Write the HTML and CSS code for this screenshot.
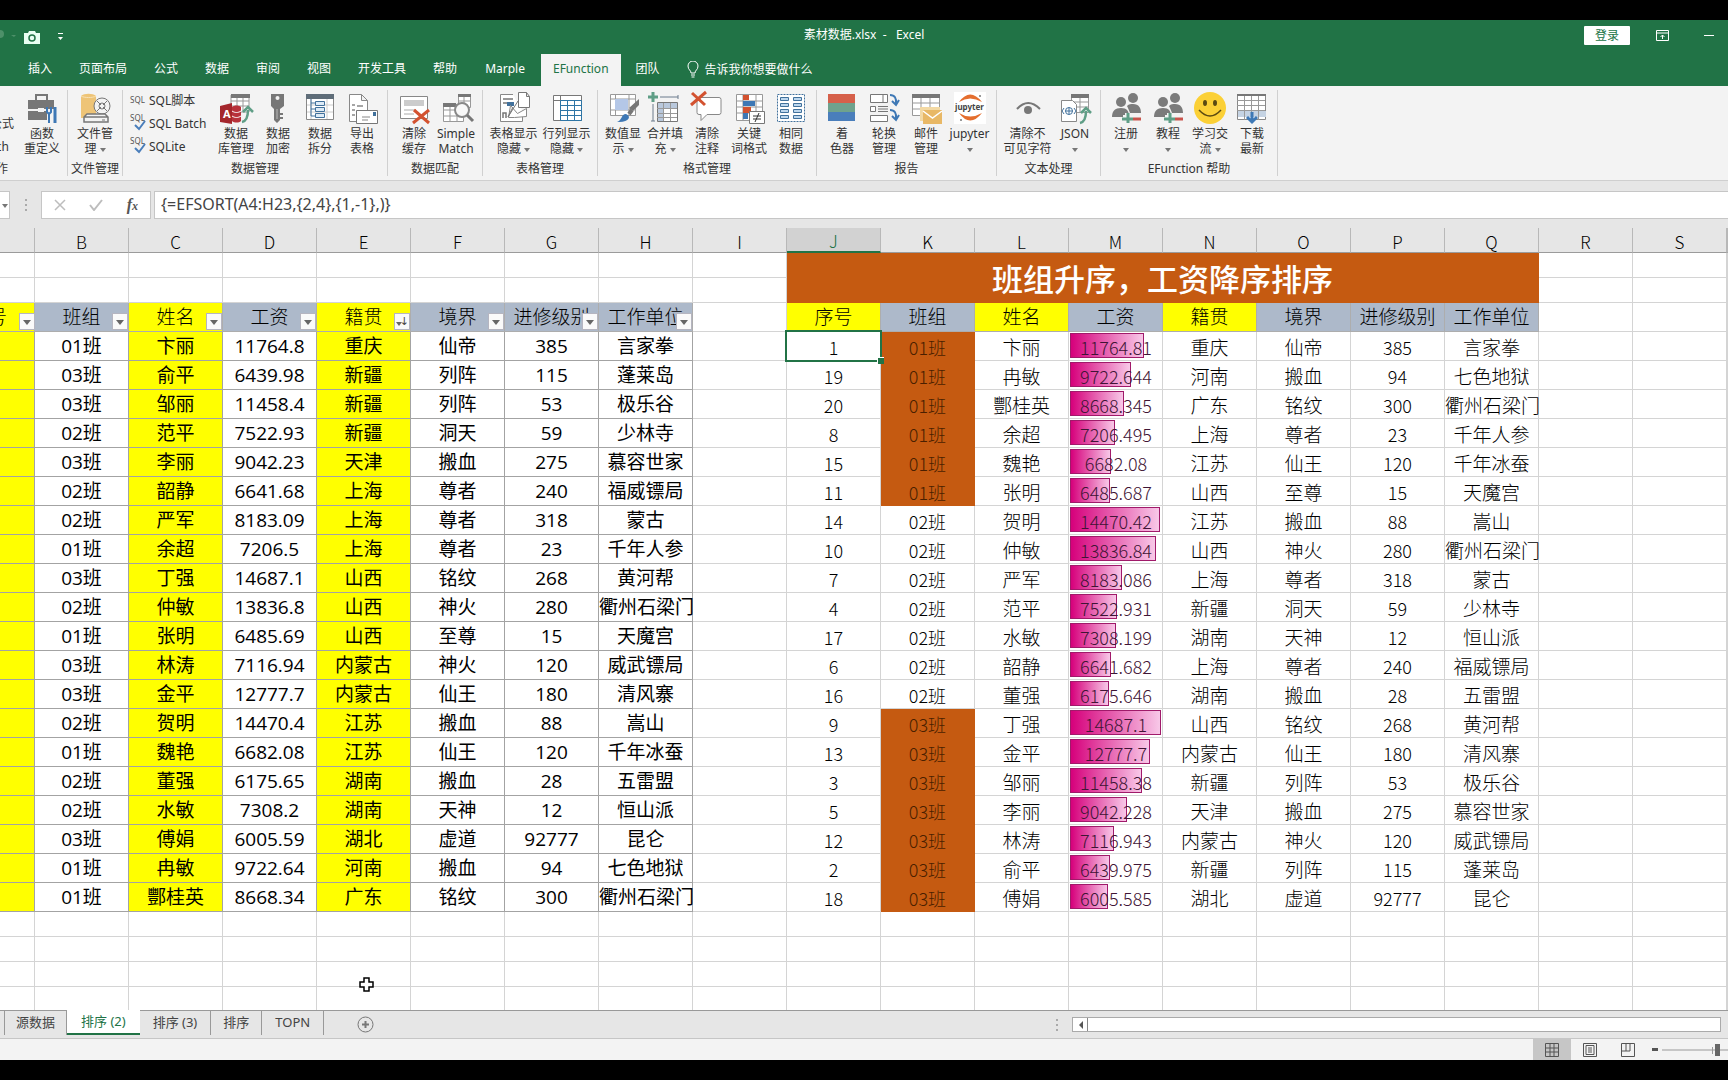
FILE: index.html
```html
<!DOCTYPE html>
<html lang="zh-CN">
<head>
<meta charset="utf-8">
<title>素材数据.xlsx - Excel</title>
<link rel="stylesheet" href="styles.css">
</head>
<body>
<svg class="defs" aria-hidden="true">
  <symbol id="people" viewBox="0 0 30 30"><g fill="#7b7b7b"><circle cx="10" cy="9" r="5"/><circle cx="22" cy="5" r="5"/><path d="M1 24c0-6 3-9 9-9s8 3 8 9z"/><path d="M16 13c2-2 4-2 6-2 6 0 8 4 8 9H19c-1-3-2-5-3-7z"/></g><path d="M17 20v11M12 25h11" stroke="#f3f3f3" stroke-width="6"/><path d="M17 20v11M11 26h11" stroke="#5f9e86" stroke-width="3"/><path d="M22 26h9" stroke="#c9544c" stroke-width="3"/></symbol>
</svg>
<div class="app">
  <header class="titlebar">
    <div class="quick">
      <svg width="60" height="18" viewBox="0 0 60 18"><circle cx="0" cy="6" r="4" fill="#4d9069"/><path d="M11 7h5l-2 2z" fill="#4d9069"/><path d="M24 5h4l1-2h6l1 2h4v11H24z" fill="#e9fff2"/><circle cx="32" cy="10" r="3" fill="none" stroke="#217346" stroke-width="1.5"/><path d="M58 5.500h5" stroke="#fff"/><path d="M58 9h5l-2.500 3z" fill="#fff"/></svg>
    </div>
    <h1 class="title">素材数据.xlsx&nbsp; -&nbsp; &nbsp;Excel</h1>
    <div class="window-tools">
      <button class="login">登录</button>
      <button class="plain" aria-label="功能区显示选项"><svg width="14" height="11" viewBox="0 0 14 11" fill="none" stroke="#fff"><path d="M.5.5h12v10H.5zM.5 3h12M6.500 9V5M4.500 7l2-2 2 2"/></svg></button>
      <button class="plain" aria-label="最小化"><svg width="10" height="11" viewBox="0 0 10 11"><path d="M0 5.500h10" stroke="#fff"/></svg></button>
    </div>
  </header>
  <nav class="tabs">
    <a href="#">插入</a><a href="#">页面布局</a><a href="#">公式</a><a href="#">数据</a><a href="#">审阅</a><a href="#">视图</a><a href="#">开发工具</a><a href="#">帮助</a><a href="#" class="latin">Marple</a><a href="#" class="active">EFunction</a><a href="#">团队</a>
    <a href="#" class="tell"><svg width="12" height="17" viewBox="0 0 12 17" fill="none" stroke="#fff"><path d="M4 12c0-3-3-3-3-7a5 5 0 0 1 10 0c0 4-3 4-3 7zM4 14h4M4.500 16h3"/></svg>告诉我你想要做什么</a>
  </nav>
  <section class="ribbon">
    <div class="group first">
      <div class="tools">
        <div class="cut"><span>公式</span><span class="short">ch</span></div>
        <button class="tool"><svg viewBox="0 0 30 30"><path d="M9 7V2h11v5" fill="none" stroke="#777" stroke-width="2"/><path d="M1 7h26v9H1zM1 18h19v9H1z" fill="#777"/><path d="M11 15h6v4h-6z" fill="#f3f3f3"/><path d="M20 14v5l2 2v9M24 14v5l-2 2" fill="none" stroke="#3e78b5" stroke-width="2"/><path d="M28 14v8M28 22v8" stroke="#3e78b5" stroke-width="3"/></svg>函数<br>重定义</button>
      </div>
      <div class="caption left">作</div>
    </div>
    <div class="group narrow">
      <div class="tools">
        <button class="tool"><svg viewBox="0 0 30 30"><path d="M1 3c3-3 12-3 15 0v22H1z" fill="#eec477"/><path d="M1 3c3 2 12 2 15 0" fill="none" stroke="#f9e2b5"/><circle cx="22" cy="13" r="8" fill="#f3f3f3" stroke="#777"/><circle cx="22" cy="13" r="3" fill="none" stroke="#777"/><path d="M17 8l4 4M27 18l-4-4M27 8l-4 4M17 18l4-4" stroke="#777"/><path d="M7 21h18l3 3v5H4v-5zM4 24h24" fill="#f3f3f3" stroke="#777" stroke-width="1.500"/><path d="M22 27h3" stroke="#777"/></svg>文件管<br>理 <i class="drop"></i></button>
      </div>
      <div class="caption">文件管理</div>
    </div>
    <div class="group">
      <div class="tools">
        <div class="sql-list">
          <button><svg width="16" height="18" viewBox="0 0 16 18"><text x="0" y="12" class="sql">SQL</text></svg>SQL脚本</button>
          <button><svg width="16" height="18" viewBox="0 0 16 18"><text x="0" y="7" class="sql">SQL</text><path d="M5 11l4 4 6-8" fill="none" stroke="#4a7ebb" stroke-width="2"/></svg>SQL Batch</button>
          <button><svg width="16" height="18" viewBox="0 0 16 18"><text x="0" y="7" class="sql">SQL</text><path d="M5 11l4 4 6-8" fill="none" stroke="#4a7ebb" stroke-width="2"/></svg>SQLite</button>
        </div>
        <button class="tool"><svg viewBox="0 0 30 30"><path d="M10 2h18v17H10zM10 8h18M10 13h18M16 2v17M22 2v17" fill="#fff" stroke="#999"/><path d="M10 1h19v4H10z" fill="#777"/><path d="M11 14c2-2 7-2 9 0v14c-2 2-7 2-9 0z" fill="#b8323b"/><path d="M11 18c3 2 6 2 9 0M11 23c3 2 6 2 9 0" fill="none" stroke="#fff"/><path d="M-1 13l12-3v21l-12-2z" fill="#a4262c"/><text x="2" y="25" class="letter">A</text><path d="M21 29c5-1 6-6 6-12M22 19l5-5 5 5" fill="none" stroke="#5f9e86" stroke-width="2.500"/></svg>数据<br>库管理</button>
        <button class="tool"><svg viewBox="0 0 30 30"><path d="M8 1h13v12l-4 3v11l-3 3-3-3V16l-3-3zM17 20h3v2h-3M17 24h3v2h-3" fill="#777"/><circle cx="14.500" cy="5" r="2" fill="#f3f3f3"/><path d="M14 16v10" stroke="#bbb"/></svg>数据<br>加密</button>
        <button class="tool"><svg viewBox="0 0 30 30"><path d="M1.500 1.500h27v25h-27z" fill="#fff" stroke="#888"/><path d="M1 1h28v5H1z" fill="#5f6d79"/><path d="M6 6v20M22 6v20M2 12h26M2 19h26" stroke="#ccc"/><path d="M6 6v17h4M6 10h4M6 16h4" fill="none" stroke="#41719c"/><path d="M10.500 8.500h9v4h-9zM10.500 14.500h9v4h-9zM10.500 20.500h9v4h-9z" fill="#ddebf7" stroke="#41719c"/></svg>数据<br>拆分</button>
        <button class="tool"><svg viewBox="0 0 30 30"><path d="M2.500 1.500h12l6 6v21h-18zM14.500 1.500v6h6" fill="#fff" stroke="#888"/><path d="M5 12h3M5 17h3M5 22h3M10 13h6" stroke="#888" stroke-width="1.500"/><path d="M9.500 17.500h21v13h-21z" fill="#fff" stroke="#777"/><path d="M26 19h3v4h-3z" fill="#41719c"/><path d="M15 24h8M15 27h6" stroke="#888"/></svg>导出<br>表格</button>
      </div>
      <div class="caption">数据管理</div>
    </div>
    <div class="group roomy">
      <div class="tools">
        <button class="tool"><svg viewBox="0 0 30 30"><path d="M1.500 3.500h27v22h-27z" fill="#fff" stroke="#888"/><path d="M5 7h20v6H5z" fill="#ccc"/><path d="M5 17h12M5 21h10" stroke="#aaa"/><path d="M15 17l15 13M30 17L14 30" stroke="#d35230" stroke-width="3"/></svg>清除<br>缓存</button>
        <button class="tool"><svg viewBox="0 0 30 30"><path d="M17.500 2.500h12v12h-12zM17 8h12M23 2v12M2.500 11.500h20v17h-20zM2 17h20M2 23h20M9 11v17M16 11v17" fill="#fff" stroke="#999"/><path d="M17 1h13v3H17zM2 10h13v4H2z" fill="#777"/><circle cx="21" cy="17" r="7" fill="#f8f8f8" stroke="#888" stroke-width="2"/><path d="M26 22l6 6" stroke="#777" stroke-width="3"/></svg>Simple<br>Match</button>
      </div>
      <div class="caption">数据匹配</div>
    </div>
    <div class="group">
      <div class="tools">
        <button class="tool wide"><svg viewBox="0 0 30 30"><path d="M14 1.500H1.500v27h22V18" fill="#fff" stroke="#888"/><path d="M4 6h10M4 10h6M4 25v-5h3v5" stroke="#777" fill="none" stroke-width="1.500"/><path d="M8 9h7v4H8z" fill="#41719c"/><path d="M9.500 24.500l2-12 7 8 9-5v8l-12 1z" fill="#fff" stroke="#888"/><path d="M19.500-.5h8l3 4v11h-11zM27.500-.5v4h3" fill="#fff" stroke="#777"/><path d="M19 8L9 24l5-10" fill="none" stroke="#777"/></svg>表格显示<br>隐藏 <i class="drop"></i></button>
        <button class="tool wide"><svg viewBox="0 0 30 30"><path d="M1.500 2.500h28v25h-28zM1 7.500h28M8.500 2v25" fill="#fff" stroke="#777"/><path d="M8 12.500h21M8 17.500h21M8 22.500h21M15.500 7v20M22.500 7v20M8.500 7.500h21v20h-21z" fill="none" stroke="#2e75a5"/></svg>行列显示<br>隐藏 <i class="drop"></i></button>
      </div>
      <div class="caption">表格管理</div>
    </div>
    <div class="group">
      <div class="tools">
        <button class="tool"><svg viewBox="0 0 30 30"><path d="M2.500 1.500h25v21h-25zM2 6h25M2 17h25M7.500 1v21M21 1v21" fill="#fff" stroke="#999"/><path d="M7 6h13v11H7z" fill="#b4c7e7"/><path d="M31 6v6l-6 6-4-3z" fill="#777"/><path d="M24 17l-3 4" stroke="#777" stroke-width="4"/><path d="M9 29c5-1 4-8 9-8 6 2 3 9-9 8z" fill="#3e78b5"/></svg>数值显<br>示 <i class="drop"></i></button>
        <button class="tool"><svg viewBox="0 0 30 30"><path d="M3-1v10M-2 4h10" stroke="#5f9e86" stroke-width="3"/><path d="M10 4h18M28 2v4M3 11v17M1 28h4" stroke="#6b7b8c"/><path d="M7.500 9.500h20v19h-20z" fill="#fff" stroke="#777"/><path d="M8 10h5v18H8zM13 10h14v5H13z" fill="#b9c8dc"/><path d="M7 15.500h20M7 20.500h20M7 24.500h20M13.500 10v18M20.500 10v18" stroke="#999"/></svg>合并填<br>充 <i class="drop"></i></button>
        <button class="tool"><svg viewBox="0 0 30 30"><path d="M7 4.500h20q2 0 2 2v13q0 2-2 2H15l-6 6v-6H7q-2 0-2-2v-13q0-2 2-2z" fill="#fff" stroke="#888"/><path d="M0 0l13 12M14-1L-1 12" stroke="#d35230" stroke-width="3"/></svg>清除<br>注释</button>
        <button class="tool"><svg viewBox="0 0 30 30"><path d="M2.500 1.500h26v26h-26zM2 8h26M2 14h26M2 20h26M9 1v26M22 1v26" fill="#fff" stroke="#999"/><path d="M9 2h6v5H9zM9 14h8v6H9z" fill="#d35230"/><path d="M9 8h12v5H9zM9 20h5v6H9z" fill="#3e78b5"/><path d="M15.500 18.500h15v12h-15z" fill="#fff" stroke="#777"/><path d="M19 23h8M19 26h8M25 20l-4 9" stroke="#333"/></svg>关键<br>词格式</button>
        <button class="tool"><svg viewBox="0 0 30 30"><path d="M1.500 1.500h27v27h-27z" fill="#fff" stroke="#41719c" stroke-dasharray="2 1"/><path d="M4.500 4.500h8v3h-8zM4.500 10.500h8v3h-8zM4.500 16.500h8v3h-8zM4.500 22.500h8v3h-8zM17.500 4.500h8v3h-8zM17.500 10.500h8v3h-8zM17.500 16.500h8v3h-8zM17.500 22.500h8v3h-8z" fill="#bdd7ee" stroke="#41719c"/></svg>相同<br>数据</button>
      </div>
      <div class="caption">格式管理</div>
    </div>
    <div class="group">
      <div class="tools">
        <button class="tool"><svg viewBox="0 0 30 30"><path d="M1 1h27v9H1z" fill="#d6604a"/><path d="M1 10h27v9H1z" fill="#6fa28d"/><path d="M1 19h27v9H1z" fill="#4a7ebb"/></svg>着<br>色器</button>
        <button class="tool"><svg viewBox="0 0 30 30"><path d="M1.500 1.500h17v8h-17zM14 2v7M1.500 13.500h5v5h-5zM9 13.500h10M9 16h10M9 18.500h10M1.500 22.500h17v6h-17z" fill="#fff" stroke="#777"/><path d="M21 2q7 0 6 9M23 8l4 4 3-5M21 17q7 0 6 9M23 23l4 4 3-5" fill="none" stroke="#3e78b5" stroke-width="2"/></svg>轮换<br>管理</button>
        <button class="tool"><svg viewBox="0 0 30 30"><path d="M1.500 1.500h27v21h-27zM1 10h27M1 16h27M10 2v20M19 2v20" fill="#fff" stroke="#999"/><path d="M1 1h28v4H1z" fill="#777"/><path d="M9 14h20v14H9z" fill="#f3d9a4"/><path d="M12 17h19v14H12z" fill="#e8b866"/><path d="M12 18l9.500 7 9.500-7" fill="none" stroke="#fff" stroke-width="1.500"/></svg>邮件<br>管理</button>
        <button class="tool jup"><svg viewBox="0 0 30 30"><path d="M-1-1h32v32H-1z" fill="#fff"/><path d="M4 9q11-15 23 0-12-7-23 0zM4 20q11 15 23 0-12 7-23 0z" fill="#e46e2e"/><text x="0" y="17" class="jtext">jupyter</text><circle cx="25" cy="3" r="1" fill="#777"/><circle cx="6" cy="27" r="1" fill="#777"/></svg>jupyter<br><i class="drop"></i></button>
      </div>
      <div class="caption">报告</div>
    </div>
    <div class="group">
      <div class="tools">
        <button class="tool wide"><svg viewBox="0 0 30 30"><path d="M4 16q11-12 23 0" fill="none" stroke="#777" stroke-width="2"/><circle cx="15" cy="17" r="4" fill="#777"/></svg>清除不<br>可见字符</button>
        <button class="tool"><svg viewBox="0 0 30 30"><path d="M11.500 1.500h17v18h-17zM11 9h17M11 14h17M20 2v17" fill="#fff" stroke="#999"/><path d="M11 1h18v4H11z" fill="#777"/><path d="M1.500 7.500h11l4 4v17h-15z" fill="#fff" stroke="#888"/><circle cx="9" cy="18" r="3.500" fill="none" stroke="#41719c"/><path d="M5.500 18h7M9 14.500v7M4 15l-2 3 2 3M14 15l2 3-2 3" fill="none" stroke="#41719c"/><path d="M20 30c5-1 6-6 6-12M21 20l5-5 5 5" fill="none" stroke="#5f9e86" stroke-width="2.500"/></svg>JSON<br><i class="drop"></i></button>
      </div>
      <div class="caption">文本处理</div>
    </div>
    <div class="group">
      <div class="tools">
        <button class="tool"><svg><use href="#people"/></svg>注册<br><i class="drop"></i></button>
        <button class="tool"><svg><use href="#people"/></svg>教程<br><i class="drop"></i></button>
        <button class="tool"><svg viewBox="0 0 30 30"><circle cx="15" cy="15" r="16" fill="#fbd036"/><ellipse cx="10" cy="10" rx="2" ry="3" fill="#5b4a12"/><ellipse cx="20" cy="10" rx="2" ry="3" fill="#5b4a12"/><path d="M4 17q11 12 22 0" fill="none" stroke="#5b4a12" stroke-width="1.500"/></svg>学习交<br>流 <i class="drop"></i></button>
        <button class="tool"><svg viewBox="0 0 30 30"><path d="M.5 1.500h28v25h-28z" fill="#fff" stroke="#888"/><path d="M1 18h28v6H1z" fill="#c5d3e3"/><path d="M0 7.500h28M0 12.500h28M0 17.500h28M7.500 2v25M14.500 2v25M21.500 2v25" stroke="#999"/><path d="M0 1h29v2H0z" fill="#777"/><path d="M15 19v8M10 24l5 5 5-5" fill="none" stroke="#3e78b5" stroke-width="3"/></svg>下载<br>最新</button>
      </div>
      <div class="caption">EFunction 帮助</div>
    </div>
  </section>
  <section class="formula-bar">
    <button class="name-drop" aria-label="名称框"><i class="drop"></i></button>
    <span class="dots"></span>
    <div class="fx-tools">
      <button class="plain" aria-label="取消"><svg width="12" height="12" viewBox="0 0 12 12"><path d="M1 1l10 10M11 1L1 11" stroke="#bdbdbd" stroke-width="1.500"/></svg></button>
      <button class="plain" aria-label="输入"><svg width="14" height="12" viewBox="0 0 14 12"><path d="M1 6l4 5 8-10" fill="none" stroke="#bdbdbd" stroke-width="2"/></svg></button>
      <button class="plain fx" aria-label="插入函数">f<small>x</small></button>
    </div>
    <input class="formula" aria-label="编辑栏" value="{=EFSORT(A4:H23,{2,4},{1,-1},)}">
  </section>
  <main class="sheet">
    <table>
      <colgroup><col class="ca"><col span="18" class="c"><col></colgroup>
      <thead><tr><th><th>B<th>C<th>D<th>E<th>F<th>G<th>H<th>I<th class="cur">J<th>K<th>L<th>M<th>N<th>O<th>P<th>Q<th>R<th>S<th></tr></thead>
      <tbody class="blank">
        <tr><td><td><td><td><td><td><td><td><td><td class="banner" colspan="8" rowspan="2">班组升序，工资降序排序<td><td><td></tr>
        <tr><td><td><td><td><td><td><td><td><td><td><td><td></tr>
      </tbody>
      <tbody class="heads">
        <tr><td class="y clip">序号<button class="flt" aria-label="筛选"></button><td>班组<button class="flt" aria-label="筛选"></button><td class="y">姓名<button class="flt" aria-label="筛选"></button><td>工资<button class="flt" aria-label="筛选"></button><td class="y">籍贯<button class="flt sorted" aria-label="已排序"></button><td>境界<button class="flt" aria-label="筛选"></button><td>进修级别<button class="flt" aria-label="筛选"></button><td>工作单位<button class="flt" aria-label="筛选"></button><td class="n"><td class="y">序号<td>班组<td class="y">姓名<td>工资<td class="y">籍贯<td>境界<td>进修级别<td>工作单位<td class="n"><td class="n"><td class="n"></tr>
      </tbody>
      <tbody class="data">
        <tr><td><td>01班<td>卞丽<td>11764.8<td>重庆<td>仙帝<td>385<td>言家拳<td><td class="sel">1<td class="o">01班<td>卞丽<td><b style="width:80%"></b>11764.81<td>重庆<td>仙帝<td>385<td>言家拳<td><td><td></tr>
        <tr><td><td>03班<td>俞平<td>6439.98<td>新疆<td>列阵<td>115<td>蓬莱岛<td><td>19<td class="o">01班<td>冉敏<td><b style="width:66%"></b>9722.644<td>河南<td>搬血<td>94<td>七色地狱<td><td><td></tr>
        <tr><td><td>03班<td>邹丽<td>11458.4<td>新疆<td>列阵<td>53<td>极乐谷<td><td>20<td class="o">01班<td>酆桂英<td><b style="width:59%"></b>8668.345<td>广东<td>铭纹<td>300<td>衢州石梁门<td><td><td></tr>
        <tr><td><td>02班<td>范平<td>7522.93<td>新疆<td>洞天<td>59<td>少林寺<td><td>8<td class="o">01班<td>余超<td><b style="width:49%"></b>7206.495<td>上海<td>尊者<td>23<td>千年人参<td><td><td></tr>
        <tr><td><td>03班<td>李丽<td>9042.23<td>天津<td>搬血<td>275<td>慕容世家<td><td>15<td class="o">01班<td>魏艳<td><b style="width:45%"></b>6682.08<td>江苏<td>仙王<td>120<td>千年冰蚕<td><td><td></tr>
        <tr><td><td>02班<td>韶静<td>6641.68<td>上海<td>尊者<td>240<td>福威镖局<td><td>11<td class="o">01班<td>张明<td><b style="width:44%"></b>6485.687<td>山西<td>至尊<td>15<td>天魔宫<td><td><td></tr>
        <tr><td><td>02班<td>严军<td>8183.09<td>上海<td>尊者<td>318<td>蒙古<td><td>14<td>02班<td>贺明<td><b style="width:98%"></b>14470.42<td>江苏<td>搬血<td>88<td>嵩山<td><td><td></tr>
        <tr><td><td>01班<td>余超<td>7206.5<td>上海<td>尊者<td>23<td>千年人参<td><td>10<td>02班<td>仲敏<td><b style="width:94%"></b>13836.84<td>山西<td>神火<td>280<td>衢州石梁门<td><td><td></tr>
        <tr><td><td>03班<td>丁强<td>14687.1<td>山西<td>铭纹<td>268<td>黄河帮<td><td>7<td>02班<td>严军<td><b style="width:56%"></b>8183.086<td>上海<td>尊者<td>318<td>蒙古<td><td><td></tr>
        <tr><td><td>02班<td>仲敏<td>13836.8<td>山西<td>神火<td>280<td>衢州石梁门<td><td>4<td>02班<td>范平<td><b style="width:51%"></b>7522.931<td>新疆<td>洞天<td>59<td>少林寺<td><td><td></tr>
        <tr><td><td>01班<td>张明<td>6485.69<td>山西<td>至尊<td>15<td>天魔宫<td><td>17<td>02班<td>水敏<td><b style="width:50%"></b>7308.199<td>湖南<td>天神<td>12<td>恒山派<td><td><td></tr>
        <tr><td><td>03班<td>林涛<td>7116.94<td>内蒙古<td>神火<td>120<td>威武镖局<td><td>6<td>02班<td>韶静<td><b style="width:45%"></b>6641.682<td>上海<td>尊者<td>240<td>福威镖局<td><td><td></tr>
        <tr><td><td>03班<td>金平<td>12777.7<td>内蒙古<td>仙王<td>180<td>清风寨<td><td>16<td>02班<td>董强<td><b style="width:42%"></b>6175.646<td>湖南<td>搬血<td>28<td>五雷盟<td><td><td></tr>
        <tr><td><td>02班<td>贺明<td>14470.4<td>江苏<td>搬血<td>88<td>嵩山<td><td>9<td class="o">03班<td>丁强<td><b style="width:99%"></b>14687.1<td>山西<td>铭纹<td>268<td>黄河帮<td><td><td></tr>
        <tr><td><td>01班<td>魏艳<td>6682.08<td>江苏<td>仙王<td>120<td>千年冰蚕<td><td>13<td class="o">03班<td>金平<td><b style="width:87%"></b>12777.7<td>内蒙古<td>仙王<td>180<td>清风寨<td><td><td></tr>
        <tr><td><td>02班<td>董强<td>6175.65<td>湖南<td>搬血<td>28<td>五雷盟<td><td>3<td class="o">03班<td>邹丽<td><b style="width:78%"></b>11458.38<td>新疆<td>列阵<td>53<td>极乐谷<td><td><td></tr>
        <tr><td><td>02班<td>水敏<td>7308.2<td>湖南<td>天神<td>12<td>恒山派<td><td>5<td class="o">03班<td>李丽<td><b style="width:62%"></b>9042.228<td>天津<td>搬血<td>275<td>慕容世家<td><td><td></tr>
        <tr><td><td>03班<td>傅娟<td>6005.59<td>湖北<td>虚道<td>92777<td>昆仑<td><td>12<td class="o">03班<td>林涛<td><b style="width:48%"></b>7116.943<td>内蒙古<td>神火<td>120<td>威武镖局<td><td><td></tr>
        <tr><td><td>01班<td>冉敏<td>9722.64<td>河南<td>搬血<td>94<td>七色地狱<td><td>2<td class="o">03班<td>俞平<td><b style="width:44%"></b>6439.975<td>新疆<td>列阵<td>115<td>蓬莱岛<td><td><td></tr>
        <tr><td><td>01班<td>酆桂英<td>8668.34<td>广东<td>铭纹<td>300<td>衢州石梁门<td><td>18<td class="o">03班<td>傅娟<td><b style="width:41%"></b>6005.585<td>湖北<td>虚道<td>92777<td>昆仑<td><td><td></tr>
      </tbody>
      <tbody class="blank">
        <tr><td><td><td><td><td><td><td><td><td><td><td><td><td><td><td><td><td><td><td><td></tr>
        <tr><td><td><td><td><td><td><td><td><td><td><td><td><td><td><td><td><td><td><td><td></tr>
        <tr><td><td><td><td><td><td><td><td><td><td><td><td><td><td><td><td><td><td><td><td></tr>
        <tr><td><td><td><td><td><td><td><td><td><td><td><td><td><td><td><td><td><td><td><td></tr>
      </tbody>
    </table>
    <svg class="cursor" width="17" height="17" viewBox="0 0 17 17"><path d="M6 2h5v4h4v5h-4v4H6v-4H2V6h4z" fill="#fff" stroke="#000" stroke-width="1.500"/></svg>
  </main>
  <footer class="sheet-bar">
    <nav class="sheets">
      <a href="#" class="lead">源数据</a><a href="#" class="active">排序 (2)</a><a href="#" class="roomy">排序 (3)</a><a href="#">排序</a><a href="#" class="roomy">TOPN</a>
      <button class="plain" aria-label="新工作表"><svg width="17" height="17" viewBox="0 0 17 17" fill="none" stroke="#777"><circle cx="8.500" cy="8.500" r="7.500"/><path d="M8.500 5v7M5 8.500h7" stroke-width="2"/></svg></button>
    </nav>
    <div class="scroll"><span class="dots"></span><div class="track"><button aria-label="向左滚动"><svg width="5" height="8" viewBox="0 0 5 8"><path d="M5 0v8L1 4z" fill="#555"/></svg></button></div></div>
  </footer>
  <div class="status">
    <button class="view on" aria-label="普通"><svg width="14" height="14" viewBox="0 0 14 14" fill="none" stroke="#555"><path d="M.5.5h13v13H.5zM.5 5h13M.5 9h13M5 .5v13M9 .5v13"/></svg></button>
    <button class="view" aria-label="页面布局"><svg width="14" height="14" viewBox="0 0 14 14" fill="none" stroke="#555"><path d="M.5.5h13v13H.5zM3 2.500h8v9H3zM5 5h4M5 7h4M5 9h4"/></svg></button>
    <button class="view" aria-label="分页预览"><svg width="14" height="14" viewBox="0 0 14 14" fill="none" stroke="#555"><path d="M.5.5h13v13H.5zM.5 8H9V.5M5 .5V8"/></svg></button>
    <button class="plain minus" aria-label="缩小"><svg width="6" height="3"><path d="M0 0h6v3H0z" fill="#555"/></svg></button>
    <svg class="slider" viewBox="0 0 66 12" width="66" height="12"><path d="M0 6h66M50.500 3v7" stroke="#999"/><path d="M53 0h5v12h-5z" fill="#666"/></svg>
  </div>
</div>
</body>
</html>
```
FILE: styles.css
```css
* { box-sizing: border-box; }
body {
  margin: 0;
  background: #000;
  font: 12px/15px "Noto Sans", "Noto Sans CJK SC", sans-serif;
  color: #333;
}
button { font: inherit; color: inherit; background: none; border: 0; padding: 0; }
a { color: inherit; text-decoration: none; }
.defs { position: absolute; width: 0; height: 0; }
.app { display: flex; flex-direction: column; height: 100vh; padding: 20px 0; overflow: hidden; }

.titlebar {
  display: grid;
  grid-template-columns: 1fr auto 1fr;
  align-items: center;
  flex: none;
  height: 34px;
  padding-bottom: 4px;
  background: #217346;
  color: #fff;
}
.quick svg { display: block; overflow: visible; margin-top: 4px; }
.title { margin: 0; padding-bottom: 2px; font-size: 12px; font-weight: 400; }
.window-tools { display: flex; justify-content: flex-end; align-items: center; padding-right: 14px; }
.login { width: 46px; height: 19px; margin-right: 26px; background: #fff; color: #217346; border-radius: 1px; }
.window-tools .plain + .plain { margin-left: 34px; }
.plain svg { display: block; }

.tabs { display: flex; flex: none; gap: 3px; height: 32px; padding-left: 16px; background: #217346; color: #fff; }
.tabs a { display: flex; align-items: center; padding: 0 12px 3px; }
.tabs .latin { padding: 0 13px 3px; }
.tabs .active { background: #f3f3f3; color: #217346; }
.tabs .tell { gap: 6px; padding-top: 1px; }

.ribbon { display: flex; flex: none; height: 95px; padding: 4px 0; background: #f3f3f3; border-bottom: 1px solid #cfcfcf; }
.group { display: flex; flex-direction: column; padding: 0 4px; border-right: 1px solid #d0d0d0; }
.group.first { padding-left: 0; overflow: hidden; }
.group.narrow { padding: 0 3px; }
.group.roomy { padding: 0 5px; }
.tools { display: flex; justify-content: center; height: 72px; }
.tool { display: flow-root; width: 42px; padding-top: 3px; text-align: center; white-space: nowrap; vertical-align: top; align-self: flex-start; }
.tool svg { display: block; width: 30px; height: 30px; margin: 0 auto 3px; overflow: visible; }
.tool.wide { width: 53px; }
.tool.jup { width: 45px; }
.caption { height: 15px; margin-top: 1px; text-align: center; white-space: nowrap; }
.caption.left { text-align: left; padding-left: 0; text-indent: -4px; }
.cut { display: flex; flex-direction: column; width: 21px; padding: 26px 7px 0 0; direction: rtl; white-space: nowrap; gap: 8px; }
.cut .short { padding-right: 5px; }
.drop { display: inline-block; vertical-align: middle; border: 3px solid transparent; border-top: 4px solid #777; border-bottom: 0; }
.sql-list { display: flex; flex-direction: column; gap: 5px; width: 88px; padding: 1px 0 0 3px; }
.sql-list button { display: flex; align-items: center; gap: 3px; height: 18px; white-space: nowrap; }
.sql-list svg { overflow: visible; }
.sql { font: 8px "Noto Sans", sans-serif; fill: #555; }
.letter { font: bold 11px "Noto Sans", sans-serif; fill: #fff; }
.jtext { font: bold 8px "Noto Sans", sans-serif; fill: #444; }

.formula-bar { display: flex; flex: none; height: 47px; padding: 10px 0 9px; background: #e6e6e6; }
.name-drop { width: 10px; background: #fff; border: 1px solid #c6c6c6; border-left: 0; line-height: 10px; }
.dots { width: 2px; height: 12px; margin: auto 14px auto 15px; background: repeating-linear-gradient(#aaa 0 2px, transparent 2px 5px); }
.fx-tools { display: flex; align-items: center; justify-content: space-between; width: 110px; padding: 0 12px; background: #fff; border: 1px solid #c6c6c6; }
.fx { font: italic bold 16px/20px "Liberation Serif", serif; color: #555; }
.fx small { font-size: 12px; }
.formula { flex: 1; min-width: 0; margin-left: 3px; padding: 0 6px 2px; background: #fff; border: 1px solid #c6c6c6; border-right: 0; border-radius: 0; font: 16px "Noto Sans", sans-serif; color: #444; }

.sheet { position: relative; flex: 1; min-height: 0; overflow: hidden; background: #fff; }
table { width: 100%; table-layout: fixed; border-collapse: separate; border-spacing: 0; color: #000; }
.ca { width: 35px; }
.c { width: 94px; }
th, td { position: relative; padding: 0; text-align: center; white-space: nowrap; border: solid #d4d4d4; border-width: 0 1px 1px 0; }
th { height: 25px; padding-top: 3px; background: #e6e6e6; border-color: #9b9b9b; font: 17px/20px "Noto Sans CJK SC", sans-serif; font-weight: 300; border-right-color: #b8b8b8; }
th.cur { background: #d2d2d2; color: #217346; border-bottom: 2px solid #217346; }
.blank td { height: 25px; }
.blank .banner { background: #c55a11; border-color: #c55a11; color: #fff; font: 500 31px/40px "Noto Sans CJK SC", sans-serif; }
.heads td, .data td { height: 29px; font: 300 19px/24px "Open Sans", "Noto Sans CJK SC", sans-serif; }
.heads td { background: #adb9ca; border-color: #adadad; }
.heads .y { background: #ff0; }
.heads .n { background: none; border-color: #d4d4d4; }
.heads .clip { direction: rtl; padding-right: 28px; }
.flt { position: absolute; right: 0; bottom: 1px; width: 16px; height: 17px; background: #fafafa; border: 1px solid #b5b5c0; }
.flt::after { content: ""; position: absolute; left: 3px; top: 6px; border: 4px solid transparent; border-top: 5px solid #666; border-bottom: 0; }
.flt.sorted::after { left: 1px; top: 8px; border-width: 4px 3px 0; }
.flt.sorted::before { content: "↓"; position: absolute; right: 0; top: 2px; font: 11px/12px "DejaVu Sans", sans-serif; color: #444; }
.data td:nth-child(-n+8) { border-color: #a3a3a3; font-weight: 400; }
.data td:nth-child(4), .data td:nth-child(7) { font-weight: 500; }
.data td:nth-child(-n+8):nth-child(odd):nth-child(-n+5) { background: #ff0; }
.data td:nth-child(n+10) { padding-top: 1px; font: 300 18px/24px "Noto Sans CJK SC", sans-serif; }
.data td:nth-child(12), .data td:nth-child(14), .data td:nth-child(15), .data td:nth-child(17) { font-size: 19px; }
.data .o { background: #c55a11; border-color: #c55a11; color: #4a1f00; }
.data td:nth-child(13) { z-index: 0; border-left: 1px solid #fff; color: #3f1535; }
.data b { position: absolute; z-index: -1; left: 0; top: 1px; bottom: 2px; background: linear-gradient(90deg, #d6007b, #f8c8e8); border: 1px solid #a01a6a; }
.data .sel { z-index: 1; }
.sel::before { content: ""; position: absolute; inset: -2px; border: 2px solid #217346; }
.sel::after { content: ""; position: absolute; right: -4px; bottom: -4px; width: 6px; height: 6px; background: #217346; border: solid #fff; border-width: 1px 0 0 1px; }
.cursor { position: absolute; left: 358px; top: 748px; }

.sheet-bar { display: flex; flex: none; height: 28px; background: #e6e6e6; font-size: 13px; color: #444; }
.sheets { display: flex; flex: 1; border-top: 1px solid #999; }
.sheets a { display: flex; align-items: center; height: 24px; padding: 0 12px 2px; border-right: 1px solid #999; }
.sheets .lead { margin-left: 4px; padding: 0 11px 2px; border-left: 1px solid #999; }
.sheets .roomy { padding: 0 13px 2px; }
.sheets a.active { height: 25px; margin-top: -1px; padding: 0 14px; background: #fff; color: #217346; border-right: 0; border-bottom: 2px solid #217346; }
.sheets .plain { margin-left: 33px; }
.scroll { display: flex; width: 687px; padding: 6px 7px 6px 0; border-top: 1px solid #999; }
.track { flex: 1; display: flex; background: #fff; border: 1px solid #aaa; }
.track button { width: 15px; border-right: 1px solid #888; display: grid; place-items: center; }
.status { display: flex; align-items: center; justify-content: flex-end; flex: none; height: 22px; background: #f3f3f3; border-top: 1px solid #c6c6c6; }
.view { display: grid; place-items: center; width: 38px; height: 21px; }
.view.on { background: #c6c6c6; }
.minus { margin: 0 4px 0 5px; }
.slider { display: block; }
```
